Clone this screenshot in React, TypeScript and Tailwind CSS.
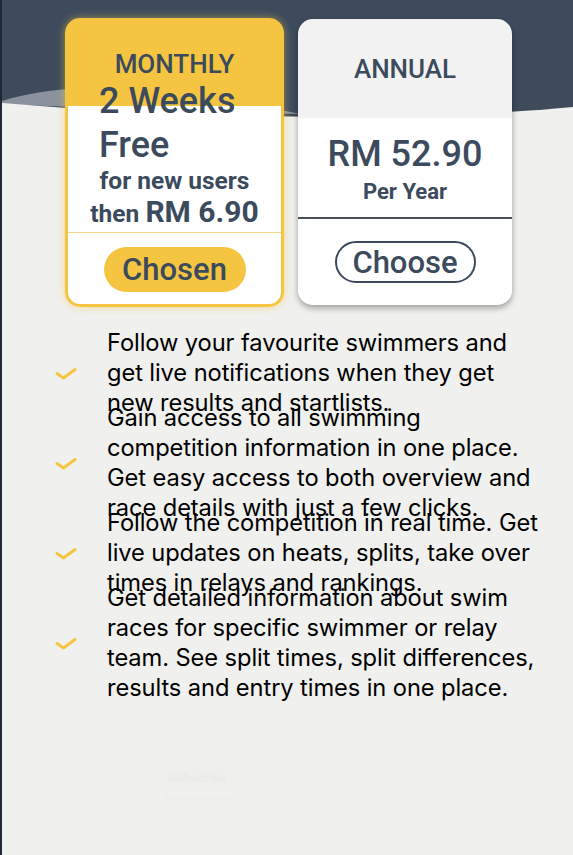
import React from "react"

const features = [
  "Follow your favourite swimmers and get live notifications when they get new results and startlists.",
  "Gain access to all swimming competition information in one place. Get easy access to both overview and race details with just a few clicks.",
  "Follow the competition in real time. Get live updates on heats, splits, take over times in relays and rankings.",
  "Get detailed information about swim races for specific swimmer or relay team. See split times, split differences, results and entry times in one place.",
]

function Check() {
  return (
    <svg width="24" height="14" viewBox="0 0 24 14" fill="none">
      <path d="M3 6.5 L9.5 11 L21 2.5" stroke="#f5c542" strokeWidth="3" strokeLinecap="round" strokeLinejoin="round" />
    </svg>
  )
}

function Wave() {
  return (
    <svg className="absolute left-0 top-0 h-[140px] w-full" viewBox="0 0 573 140" preserveAspectRatio="none">
      <path d="M0 0 H573 V107 C450 119 220 122 0 103 Z" fill="#3d4b5d" />
      <path d="M0 101 C30 92 70 86 120 88 C180 91 240 103 300 114 C200 112 90 108 0 104 Z" fill="#ffffff" fillOpacity="0.4" />
    </svg>
  )
}

function MonthlyCard() {
  return (
    <div className="w-[219px] rounded-[15px] border-[3px] border-[#f5c542] bg-[linear-gradient(to_bottom,#f5c542_0,#f5c542_85px,#ffffff_85px)] pt-[28px] pb-[12px] text-[#3b4a5c] shadow-[0_0_8px_rgba(245,197,66,0.55)]">
      <p className="text-center text-[26px] font-medium leading-[30px]">MONTHLY</p>
      <div className="pl-[31px] text-[36px] font-medium leading-[44px]">
        <p>2 Weeks</p>
        <p>Free</p>
      </div>
      <p className="text-center text-[24.5px] font-bold leading-[28px]">for new users</p>
      <p className="text-center text-[24.5px] font-bold leading-[34px]">
        then <span className="text-[30px] leading-[34px]">RM 6.90</span>
      </p>
      <div className="mt-[1px] border-t-[1.5px] border-[#f4d98a]" />
      <div className="mt-[14px] flex justify-center">
        <button className="h-[45px] w-[142px] rounded-full bg-[#f5c542] text-[31px] font-medium text-[#3b4a5c]">
          Chosen
        </button>
      </div>
    </div>
  )
}

function AnnualCard() {
  return (
    <div className="mt-[1px] w-[214px] rounded-[15px] bg-[linear-gradient(to_bottom,#f2f2f2_0,#f2f2f2_99px,#ffffff_99px)] pt-[35px] pb-[22px] text-[#3b4a5c] shadow-[0_3px_6px_rgba(0,0,0,0.35)]">
      <p className="text-center text-[26px] font-medium leading-[30px]">ANNUAL</p>
      <p className="mt-[49px] text-center text-[36px] font-medium leading-[42px]">RM 52.90</p>
      <p className="mt-[4px] text-center text-[22px] font-bold leading-[26px]">Per Year</p>
      <div className="mt-[12px] border-t-2 border-[#4a4f55]" />
      <div className="mt-[22px] flex justify-center">
        <button className="h-[42px] w-[141px] rounded-full border-2 border-[#3b4a5c] text-[31px] font-medium leading-none text-[#3b4a5c]">
          Choose
        </button>
      </div>
    </div>
  )
}

export default function App() {
  return (
    <div className="relative min-h-[855px] overflow-hidden border-l-2 border-[#202a36] bg-[#f0f0ee] font-['Roboto',sans-serif]">
      <Wave />
      <div className="relative flex items-start gap-[14px] pl-[63px] pt-[18px]">
        <MonthlyCard />
        <AnnualCard />
      </div>

      <ul className="mt-[21px] font-['Inter',sans-serif] text-[23.7px] tracking-[-0.1px] text-black">
        {features.map((f) => (
          <li key={f} className="flex h-[90px] items-center">
            <div className="flex w-[105px] shrink-0 justify-end pr-[29px] pt-[2px]">
              <Check />
            </div>
            <p className="w-[438px] leading-[30px]">{f}</p>
          </li>
        ))}
      </ul>

      <div className="mt-[78px] flex flex-col items-center pr-[180px] text-[#ebebe9]">
        <div className="flex h-[24px] w-[153px] items-center justify-center rounded-full bg-[#efefed] text-[13px] font-bold">
          Subscribe
        </div>
        <p className="mt-[2px] text-[8px] text-[#ededeb]">Restore purchases</p>
        <div className="mt-[2px] h-[16px] w-[194px] rounded-md bg-[#efefed]" />
      </div>
    </div>
  )
}
